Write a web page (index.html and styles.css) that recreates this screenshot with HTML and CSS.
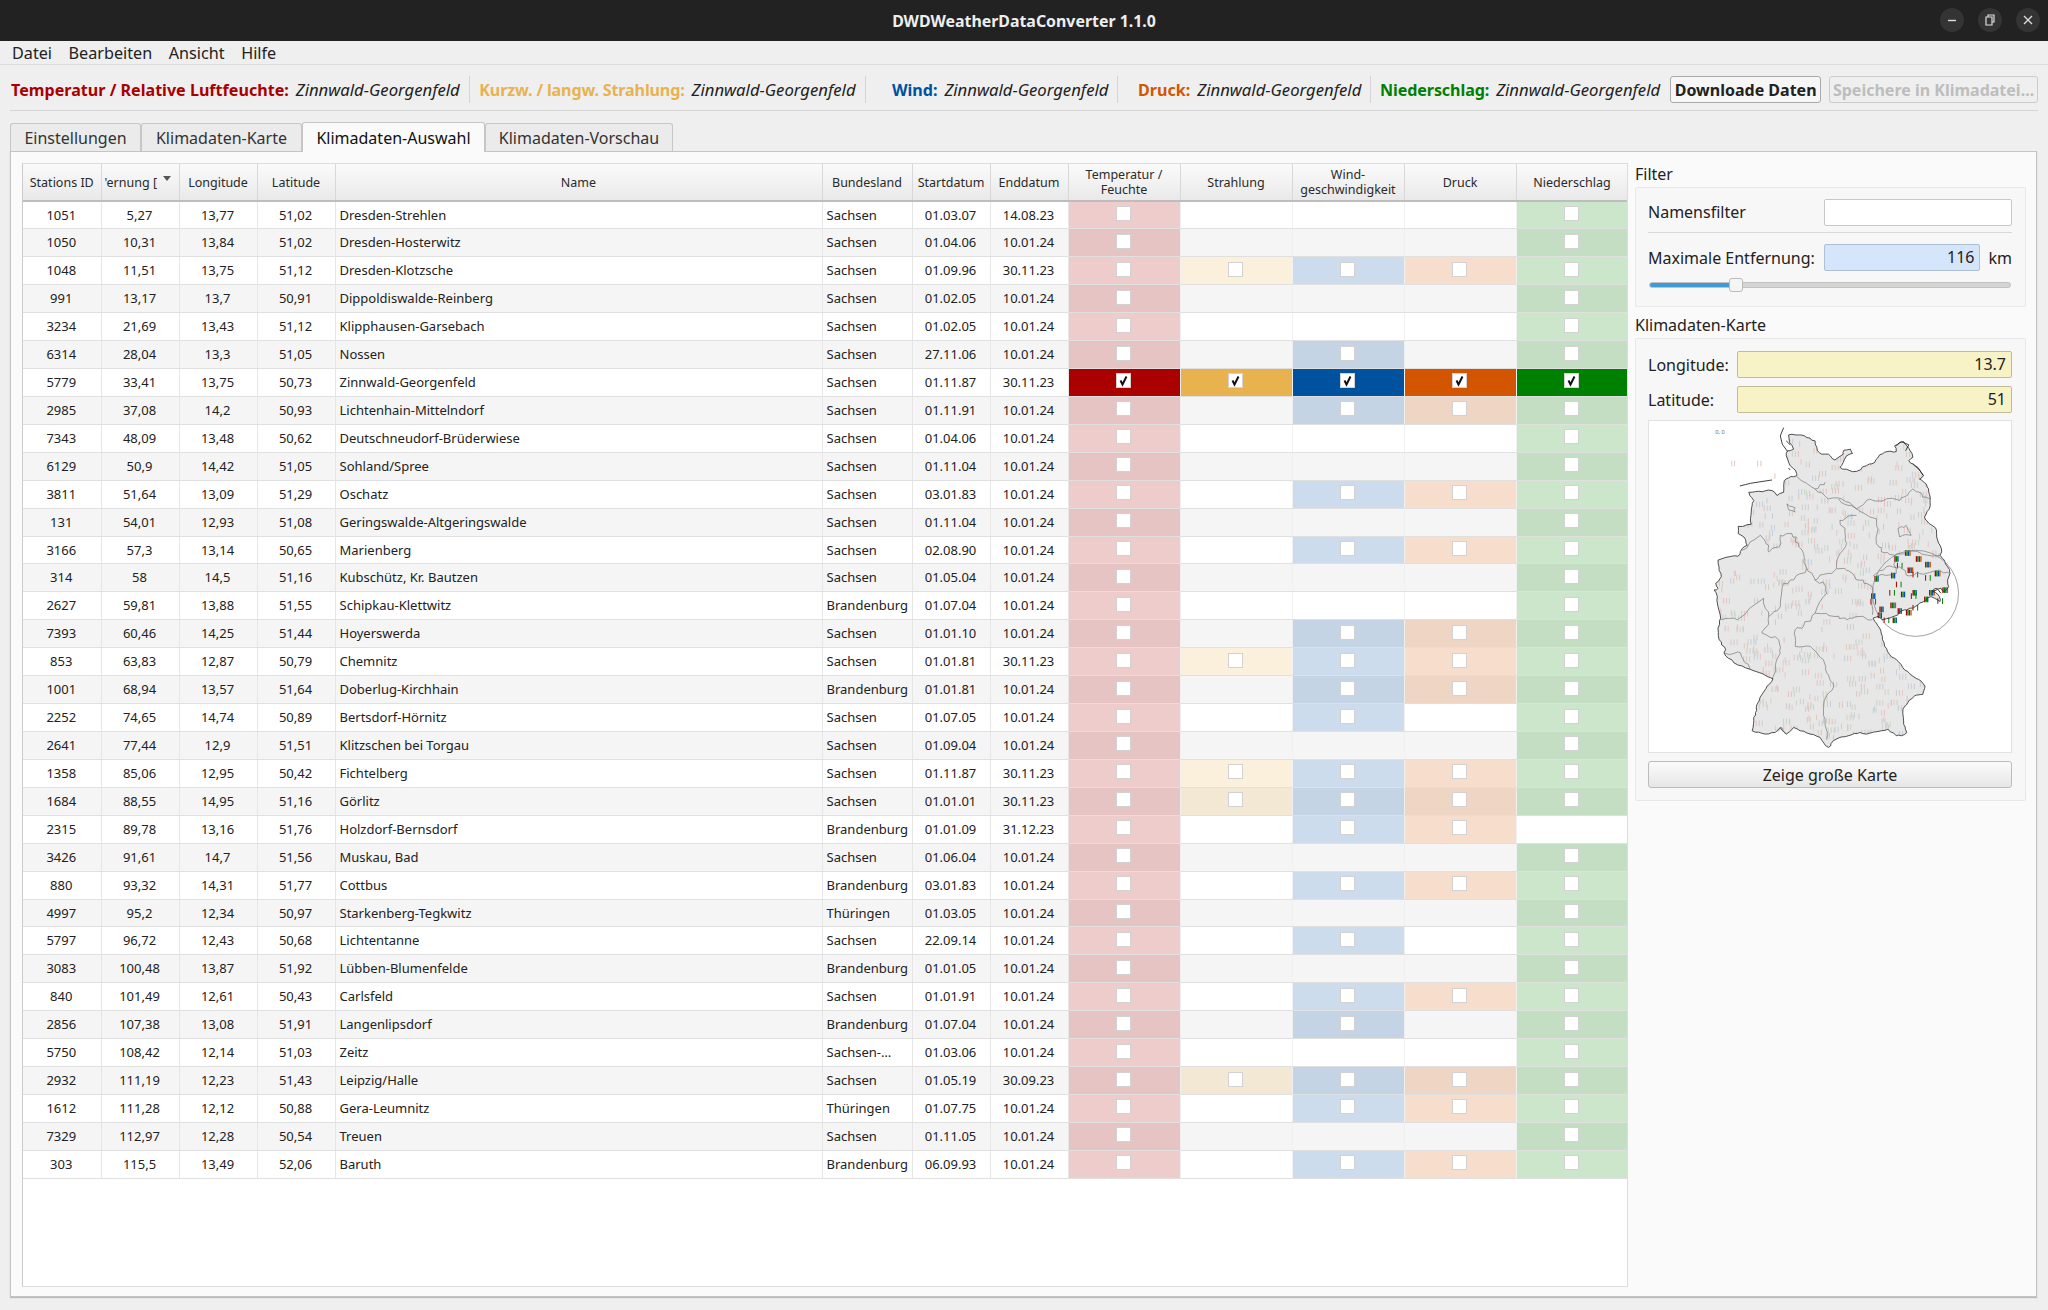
FILE: index.html
```html
<!DOCTYPE html>
<html lang="de">
<head>
    <meta charset="UTF-8">
    <title>DWDWeatherDataConverter 1.1.0</title>
    <link rel="stylesheet" href="styles.css">
</head>
<body>
    <header class="titlebar">
        <span class="title">DWDWeatherDataConverter 1.1.0</span>
        <div class="win-buttons">
            <span class="win-btn"><svg width="10" height="10" viewBox="0 0 10 10"><path d="M1 5.5h8" stroke="#ddd" stroke-width="1.4"/></svg></span>
            <span class="win-btn"><svg width="10" height="12" viewBox="0 0 10 12"><path d="M3 3V1h6v7H7M1 3h6v8H1z" fill="none" stroke="#ddd" stroke-width="1.2"/></svg></span>
            <span class="win-btn"><svg width="10" height="10" viewBox="0 0 10 10"><path d="M1 1l8 8M9 1l-8 8" stroke="#ddd" stroke-width="1.3"/></svg></span>
        </div>
    </header>

    <nav class="menubar">
        <span>Datei</span><span>Bearbeiten</span><span>Ansicht</span><span>Hilfe</span>
    </nav>

    <div class="toolbar">
        <div class="source s-temp"><b>Temperatur / Relative Luftfeuchte:</b><i>Zinnwald-Georgenfeld</i></div>
        <div class="source s-rad"><b>Kurzw. / langw. Strahlung:</b><i>Zinnwald-Georgenfeld</i></div>
        <div class="source s-wind"><b>Wind:</b><i>Zinnwald-Georgenfeld</i></div>
        <div class="source s-press"><b>Druck:</b><i>Zinnwald-Georgenfeld</i></div>
        <div class="source s-rain"><b>Niederschlag:</b><i>Zinnwald-Georgenfeld</i></div>
        <button class="tool-btn">Downloade Daten</button>
        <button class="tool-btn disabled">Speichere in Klimadatei...</button>
    </div>

    <div class="tabs">
        <span class="tab t1">Einstellungen</span>
        <span class="tab t2">Klimadaten-Karte</span>
        <span class="tab t3 active">Klimadaten-Auswahl</span>
        <span class="tab t4">Klimadaten-Vorschau</span>
    </div>

    <main class="panel">
        <div class="table-box">
            <table class="stations">
                <colgroup>
                    <col class="c-num"><col class="c-num"><col class="c-num"><col class="c-num"><col class="c-name"><col class="c-land"><col class="c-num"><col class="c-num">
                    <col class="c-flag"><col class="c-flag"><col class="c-flag"><col class="c-flag"><col class="c-flag">
                </colgroup>
                <thead>
                    <tr>
                        <th>Stations ID</th>
                        <th class="sorted"><span class="clip">'ernung [</span><span class="arrow"></span></th>
                        <th>Longitude</th><th>Latitude</th><th>Name</th><th>Bundesland</th><th>Startdatum</th><th>Enddatum</th>
                        <th>Temperatur /<br>Feuchte</th><th>Strahlung</th><th>Wind-<br>geschwindigkeit</th><th>Druck</th><th>Niederschlag</th>
                    </tr>
                </thead>
                <tbody id="rows"></tbody>
            </table>
        </div>

        <aside class="side">
            <h3>Filter</h3>
            <section class="group filter">
                <div class="line split">
                    <label>Namensfilter</label>
                    <span class="field name-field"></span>
                </div>
                <div class="line">
                    <label>Maximale Entfernung:</label>
                    <span class="field blue">116</span>
                    <span class="unit">km</span>
                </div>
                <div class="slider"><span class="fill"></span><span class="knob"></span></div>
            </section>

            <h3>Klimadaten-Karte</h3>
            <section class="group climate">
                <div class="coord">
                    <label>Longitude:</label><span class="field yellow">13.7</span>
                </div>
                <div class="coord">
                    <label>Latitude:</label><span class="field yellow">51</span>
                </div>
                <div class="map">
                    <svg width="362" height="331" viewBox="-156 0 1092 999">
                        <defs><clipPath id="land"><path id="landShape" d="M265 42 295 42 320 50 345 60 352 90 365 100 385 100 405 118 430 100 432 88 452 85 458 98 440 105 430 125 420 140 450 150 470 152 500 135 525 125 540 102 565 92 590 92 585 75 600 65 612 62 622 75 632 90 640 110 628 120 640 130 655 140 665 155 672 165 660 175 680 190 688 215 692 240 690 265 675 290 690 310 708 322 712 350 722 375 727 395 722 405 735 420 745 440 752 460 745 480 748 500 735 515 725 505 710 505 700 515 720 530 722 545 715 540 695 530 680 540 660 550 640 565 615 570 595 585 570 595 550 600 535 590 520 595 530 610 540 625 548 650 555 680 570 705 590 720 610 745 640 770 665 785 677 800 670 825 645 830 625 850 610 870 612 905 622 940 605 950 590 950 565 930 545 935 500 945 480 940 445 950 420 955 400 965 385 985 370 970 360 955 330 945 300 935 280 925 258 945 240 925 225 940 195 945 155 935 160 905 165 880 170 855 185 825 200 800 218 778 185 762 150 750 100 730 70 700 75 690 55 660 52 625 60 595 52 560 50 530 40 510 52 505 45 490 62 470 55 440 52 420 85 410 112 408 125 385 140 375 130 350 113 340 113 318 135 315 152 312 150 295 155 255 160 240 148 225 145 215 175 212 215 210 230 225 250 215 252 180 265 172 290 165 285 148 270 135 258 105 262 90 280 85 268 65z"/></clipPath></defs>
                        <use href="#landShape" class="land"/>
                        <g id="ticks"></g>
                        <use href="#landShape" class="outline"/>
                        <path id="borders" class="inner" d="M290 168 345 205 385 235 425 235 470 265 530 295 530 370 545 395 585 405M415 235 470 265 500 240 560 235 600 240 640 205 670 230 692 235M470 285 420 300 435 330 440 370 415 410 410 445 435 445 465 470 490 480 520 510 518 585M520 468 560 440 600 440 620 465 660 460 720 450 750 460M530 468 590 460 585 405 625 392 722 406M410 445 385 460 345 480 375 495 380 520 345 580 310 620 285 630 285 680 330 680 370 720 380 760 402 800 372 845 375 900 380 962M320 445 345 480M125 390 180 345 205 375 205 395 235 380 240 345 275 340 295 370 310 400 320 445 280 480 250 490 240 560 205 590 200 620 185 640 235 660 240 700 216 776M60 600 110 600 190 535 205 590M70 700 120 700 150 750M345 580 405 590 440 600 480 590 518 600M345 205 375 185M260 250 285 262 285 275 265 268zM595 325 620 315 635 345 600 350zM230 935 245 925 258 945"/>
                        <path class="coast" d="M250 20 240 45 246 70 262 92M258 60 270 72M118 196 135 192 150 188 215 178M265 142 270 148M590 75 605 62 628 72 618 90M640 128 660 148 672 165M700 515 715 508 725 520"/>
                        <circle class="radius" cx="648" cy="520" r="130"/>
                        <text class="origin" x="44" y="40">0, 0</text>
                    </svg>
                </div>
                <button class="map-btn">Zeige große Karte</button>
            </section>
        </aside>
    </main>

    <script src="script.js"></script>
</body>
</html>
```
FILE: styles.css
```css
* { box-sizing: border-box; }
html, body { margin: 0; height: 1310px; overflow: hidden; }
body { font-family: "Noto Sans", sans-serif; background: #efefef; color: #222; font-size: 16px; }

.titlebar { height: 41px; background: #222; color: #eee; display: flex; align-items: center; justify-content: center; position: relative; }
.title { font-weight: 700; font-size: 15.9px; }
.win-buttons { position: absolute; right: 8px; top: 8px; display: flex; gap: 14px; }
.win-btn { width: 24px; height: 24px; border-radius: 50%; background: #343434; display: flex; align-items: center; justify-content: center; }

.menubar { height: 24px; display: flex; gap: 16.5px; padding-left: 12px; align-items: center; font-size: 16.2px; border-bottom: 1px solid #dcdcdc; }

.toolbar { margin: 0 10px; height: 46px; padding-top: 4px; display: flex; align-items: center; border-bottom: 1px solid #d4d4d4; }
.source { height: 27px; display: flex; align-items: center; justify-content: flex-end; gap: 7px; padding-right: 9px; border-right: 1px solid #d4d4d4; white-space: nowrap; }
.source b { font-size: 16.1px; }
.source i { color: #222; font-size: 16.7px; }
.s-temp { width: 460px; }
.s-temp b { color: #aa0000; }
.s-rad { width: 396px; }
.s-rad b { color: #e8b34f; letter-spacing: -0.15px; }
.s-wind { width: 253px; }
.s-wind b { color: #00519e; }
.s-press { width: 253px; }
.s-press b { color: #d45500; }
.s-rain { width: 298px; border-right: none; }
.s-rain b { color: #008000; letter-spacing: -0.1px; }
.tool-btn { height: 27px; margin-left: 1px; font: 700 16px "Noto Sans", sans-serif; color: #222; width: 151px; padding: 0; background: #f6f6f6; border: 1px solid #aaa; border-radius: 3px; }
.tool-btn.disabled { width: 209px; margin-left: 8px; color: #bdbdbd; border-color: #ccc; background: #efefef; }

.tabs { height: 40px; padding: 10px 0 0 10px; display: flex; align-items: flex-end; font-size: 16px; }
.tab { height: 28px; display: flex; align-items: center; justify-content: center; background: #ebebeb; border: 1px solid #c6c6c6; border-bottom: none; border-radius: 3px 3px 0 0; color: #333; }
.tab.active { height: 30px; background: #fafafa; color: #111; margin-bottom: -1px; position: relative; z-index: 1; }
.t1 { width: 131px; }
.t2 { width: 161px; }
.t3 { width: 183px; }
.t4 { width: 188px; }

.panel { margin: 0 10px 0 10px; width: 2027px; height: 1146px; background: #fafafa; border: 1px solid #c4c4c4; padding: 11px 10px 9px 11px; display: flex; gap: 7px; box-shadow: 0 1px 1px #bbb; }

.table-box { width: 1606px; height: 1124px; background: #fff; border: 1px solid #ddd; border-left-color: #ccc; flex: none; overflow: hidden; }
.stations { border-collapse: collapse; table-layout: fixed; width: 1605px; font-size: 13px; color: #222; }
.c-num { width: 78px; }
.c-name { width: 487px; }
.c-land { width: 90px; }
.c-flag { width: 112px; }
.stations th { height: 37px; padding: 0; font-weight: 400; font-size: 12.5px; line-height: 15px; color: #2a2a2a; background: linear-gradient(#fafafa, #e9e9e9); border-right: 1px solid #d8d8d8; border-bottom: 2px solid #bdbdbd; }
.stations th.sorted { position: relative; }
.clip { display: block; width: 52px; margin-left: 3px; text-align: right; white-space: nowrap; }
.arrow { position: absolute; right: 8px; top: 12px; border: 4px solid transparent; border-top: 5px solid #555; }
.stations td { height: 27.93px; padding: 0 1px 1px 0; text-align: center; border-right: 1px solid #e6e6e6; border-bottom: 1px solid #e0e0e0; white-space: nowrap; overflow: hidden; }
.stations td.left { text-align: left; padding-left: 4px; }
.stations tbody tr:nth-child(even) { background: #f5f5f5; }
.stations td.f { padding: 0 2px 0 0; border-right: 1px solid #f0f0f0; }
.box { display: block; width: 15px; height: 15px; margin: -3px auto 0; background: #fff; border: 1px solid #d2d2d2; }
.box svg { display: block; }
td.temp { background: rgba(170, 0, 0, 0.2); }
td.rad { background: rgba(232, 179, 79, 0.2); }
td.wind { background: rgba(0, 81, 158, 0.2); }
td.press { background: rgba(212, 85, 0, 0.2); }
td.rain { background: rgba(0, 128, 0, 0.2); }
.selected td.temp { background: #aa0000; }
.selected td.rad { background: #e8b34f; }
.selected td.wind { background: #00519e; }
.selected td.press { background: #d45500; }
.selected td.rain { background: #008000; }

.side { width: 391px; flex: none; }
.side h3 { margin: 0; font-weight: 400; font-size: 16px; height: 24px; line-height: 22px; }
.group { background: #f7f7f7; border: 1px solid #e8e8e8; border-radius: 2px; padding: 11px 13px 12px 12px; margin-bottom: 7px; }
.filter { height: 120px; }
.climate { padding-top: 12px; }
.line { display: flex; align-items: center; height: 27px; margin-bottom: 11px; }
.line label { width: 176px; flex: none; }
.split { height: 34px; padding-bottom: 7px; border-bottom: 1px solid #d8d8d8; }
.field { display: block; height: 27px; line-height: 25px; padding: 0 5px; text-align: right; background: #fff; border: 1px solid #c8c8c8; border-radius: 2px; }
.name-field { width: 188px; }
.blue { width: 158px; background: #d5e6fb; border-color: #aebfd8; }
.unit { margin-left: 8px; }
.slider { position: relative; height: 6px; margin: 2px 1px 0; background: #d4d4d4; border: 1px solid #c2c2c2; border-radius: 3px; }
.fill { display: block; width: 82px; height: 4px; background: #3f9ad6; border-radius: 2px; }
.knob { position: absolute; left: 79px; top: -5px; width: 14px; height: 14px; background: #f5f5f5; border: 1px solid #bbb; border-radius: 3px; }
.coord { display: flex; align-items: center; justify-content: space-between; height: 27px; margin-bottom: 8px; }
.coord .field { width: 275px; }
.yellow { background: #f8f3c6; border-color: #c0bb98; }
.map { width: 364px; height: 333px; margin-top: -1px; background: #fff; border: 1px solid #e2e2e2; }
.map svg { display: block; }
.land { fill: #e7e7e7; }
.outline { fill: none; stroke: #333; stroke-width: 2.6; stroke-linejoin: round; }
.inner { fill: none; stroke: #666; stroke-width: 1.8; stroke-linejoin: round; }
.coast { fill: none; stroke: #222; stroke-width: 2.6; }
.radius { fill: none; stroke: #888; stroke-width: 2.4; }
.origin { font-size: 17px; fill: #666; font-family: "Noto Sans", sans-serif; }
.map-btn { display: block; width: 364px; height: 27px; margin-top: 8px; padding: 0; font: 16px "Noto Sans", sans-serif; color: #222; background: linear-gradient(#fbfbfb, #e6e6e6); border: 1px solid #bcbcbc; border-radius: 3px; }
```
FILE: script.js
```js
// id, distance, lon, lat, name, state, start, end, flags (S = radiation, W = wind, D = pressure, N = rain)
const stations = [
    ["1051", "5,27", "13,77", "51,02", "Dresden-Strehlen", "Sachsen", "01.03.07", "14.08.23", "N"],
    ["1050", "10,31", "13,84", "51,02", "Dresden-Hosterwitz", "Sachsen", "01.04.06", "10.01.24", "N"],
    ["1048", "11,51", "13,75", "51,12", "Dresden-Klotzsche", "Sachsen", "01.09.96", "30.11.23", "SWDN"],
    ["991", "13,17", "13,7", "50,91", "Dippoldiswalde-Reinberg", "Sachsen", "01.02.05", "10.01.24", "N"],
    ["3234", "21,69", "13,43", "51,12", "Klipphausen-Garsebach", "Sachsen", "01.02.05", "10.01.24", "N"],
    ["6314", "28,04", "13,3", "51,05", "Nossen", "Sachsen", "27.11.06", "10.01.24", "WN"],
    ["5779", "33,41", "13,75", "50,73", "Zinnwald-Georgenfeld", "Sachsen", "01.11.87", "30.11.23", "SWDN"],
    ["2985", "37,08", "14,2", "50,93", "Lichtenhain-Mittelndorf", "Sachsen", "01.11.91", "10.01.24", "WDN"],
    ["7343", "48,09", "13,48", "50,62", "Deutschneudorf-Brüderwiese", "Sachsen", "01.04.06", "10.01.24", "N"],
    ["6129", "50,9", "14,42", "51,05", "Sohland/Spree", "Sachsen", "01.11.04", "10.01.24", "N"],
    ["3811", "51,64", "13,09", "51,29", "Oschatz", "Sachsen", "03.01.83", "10.01.24", "WDN"],
    ["131", "54,01", "12,93", "51,08", "Geringswalde-Altgeringswalde", "Sachsen", "01.11.04", "10.01.24", "N"],
    ["3166", "57,3", "13,14", "50,65", "Marienberg", "Sachsen", "02.08.90", "10.01.24", "WDN"],
    ["314", "58", "14,5", "51,16", "Kubschütz, Kr. Bautzen", "Sachsen", "01.05.04", "10.01.24", "N"],
    ["2627", "59,81", "13,88", "51,55", "Schipkau-Klettwitz", "Brandenburg", "01.07.04", "10.01.24", "N"],
    ["7393", "60,46", "14,25", "51,44", "Hoyerswerda", "Sachsen", "01.01.10", "10.01.24", "WDN"],
    ["853", "63,83", "12,87", "50,79", "Chemnitz", "Sachsen", "01.01.81", "30.11.23", "SWDN"],
    ["1001", "68,94", "13,57", "51,64", "Doberlug-Kirchhain", "Brandenburg", "01.01.81", "10.01.24", "WDN"],
    ["2252", "74,65", "14,74", "50,89", "Bertsdorf-Hörnitz", "Sachsen", "01.07.05", "10.01.24", "WN"],
    ["2641", "77,44", "12,9", "51,51", "Klitzschen bei Torgau", "Sachsen", "01.09.04", "10.01.24", "N"],
    ["1358", "85,06", "12,95", "50,42", "Fichtelberg", "Sachsen", "01.11.87", "30.11.23", "SWDN"],
    ["1684", "88,55", "14,95", "51,16", "Görlitz", "Sachsen", "01.01.01", "30.11.23", "SWDN"],
    ["2315", "89,78", "13,16", "51,76", "Holzdorf-Bernsdorf", "Brandenburg", "01.01.09", "31.12.23", "WD"],
    ["3426", "91,61", "14,7", "51,56", "Muskau, Bad", "Sachsen", "01.06.04", "10.01.24", "N"],
    ["880", "93,32", "14,31", "51,77", "Cottbus", "Brandenburg", "03.01.83", "10.01.24", "WDN"],
    ["4997", "95,2", "12,34", "50,97", "Starkenberg-Tegkwitz", "Thüringen", "01.03.05", "10.01.24", "N"],
    ["5797", "96,72", "12,43", "50,68", "Lichtentanne", "Sachsen", "22.09.14", "10.01.24", "WN"],
    ["3083", "100,48", "13,87", "51,92", "Lübben-Blumenfelde", "Brandenburg", "01.01.05", "10.01.24", "N"],
    ["840", "101,49", "12,61", "50,43", "Carlsfeld", "Sachsen", "01.01.91", "10.01.24", "WDN"],
    ["2856", "107,38", "13,08", "51,91", "Langenlipsdorf", "Brandenburg", "01.07.04", "10.01.24", "WN"],
    ["5750", "108,42", "12,14", "51,03", "Zeitz", "Sachsen-…", "01.03.06", "10.01.24", "N"],
    ["2932", "111,19", "12,23", "51,43", "Leipzig/Halle", "Sachsen", "01.05.19", "30.09.23", "SWDN"],
    ["1612", "111,28", "12,12", "50,88", "Gera-Leumnitz", "Thüringen", "01.07.75", "10.01.24", "WDN"],
    ["7329", "112,97", "12,28", "50,54", "Treuen", "Sachsen", "01.11.05", "10.01.24", "N"],
    ["303", "115,5", "13,49", "52,06", "Baruth", "Brandenburg", "06.09.93", "10.01.24", "WDN"],
];

const check = '<svg width="13" height="13" viewBox="0 0 13 13"><path d="M3.5 6.5 5.5 10.5 9.5 2.5" fill="none" stroke="#111" stroke-width="2"/></svg>';

function flagCell(cls, on, selected) {
    if (!on) return '<td class="f"></td>';
    return `<td class="f ${cls}"><span class="box">${selected ? check : ""}</span></td>`;
}

document.getElementById("rows").innerHTML = stations.map(s => {
    const sel = s[0] === "5779";
    const f = s[8];
    return `<tr${sel ? ' class="selected"' : ""}>
        <td>${s[0]}</td><td>${s[1]}</td><td>${s[2]}</td><td>${s[3]}</td>
        <td class="left">${s[4]}</td><td class="left">${s[5]}</td><td>${s[6]}</td><td>${s[7]}</td>
        ${flagCell("temp", true, sel)}${flagCell("rad", f.includes("S"), sel)}${flagCell("wind", f.includes("W"), sel)}${flagCell("press", f.includes("D"), sel)}${flagCell("rain", f.includes("N"), sel)}
    </tr>`;
}).join("");

let seed = 7;
function rnd(n) {
    seed = (seed * 16807) % 2147483647;
    return seed % n;
}

// borders on the map are traced coarsely, so wobble the long straight pieces a bit
function roughen(d, amp) {
    return d.split("M").filter(Boolean).map(part => {
        const closed = part.includes("z");
        const n = part.replace("z", "").trim().split(/\s+/).map(Number);
        let out = `M${n[0]} ${n[1]}`;
        for (let i = 2; i < n.length; i += 2) {
            const steps = Math.min(4, Math.ceil(Math.hypot(n[i] - n[i - 2], n[i + 1] - n[i - 1]) / 12));
            for (let k = 1; k < steps; k++) {
                const x = n[i - 2] + (n[i] - n[i - 2]) * k / steps + rnd(amp * 2 + 1) - amp;
                const y = n[i - 1] + (n[i + 1] - n[i - 1]) * k / steps + rnd(amp * 2 + 1) - amp;
                out += ` ${x} ${y}`;
            }
            out += ` ${n[i]} ${n[i + 1]}`;
        }
        return out + (closed ? "z" : "");
    }).join("");
}
const borders = document.getElementById("borders");
borders.setAttribute("d", roughen(borders.getAttribute("d"), 5));
const landShape = document.getElementById("landShape");
landShape.setAttribute("d", roughen(landShape.getAttribute("d"), 2));

// station markers on the map: pale ones everywhere, full colour inside the search radius
const nearby = [[622,390],[590,408],[598,428],[630,442],[683,425],[645,455],[655,408],[712,452],[683,465],[530,468],[580,458],[595,485],[735,502],[520,520],[575,510],[610,515],[645,510],[640,520],[695,510],[680,530],[645,555],[600,565],[578,548],[518,537],[545,560],[540,578],[558,593],[585,593],[625,570],[720,535]];
const colours = ["#aa0000", "#008000", "#00519e", "#d45500", "#e8b34f"];
const pale = ["#e8c4c4", "#c6d8c6", "#c2cfdc", "#dccbbc", "#cdcdcd", "#e6c0c0"];
let marks = "";
function tick(x, y, colour, w) {
    marks += `<rect x="${x}" y="${y}" width="${w}" height="17" fill="${colour}"/>`;
}
for (let i = 0; i < 520; i++) {
    const x = 40 + rnd(670), y = 40 + rnd(930);
    if (Math.hypot(x - 648, y - 520) < 132) continue;
    const n = 1 + rnd(3);
    for (let k = 0; k < n; k++) tick(x + k * 9, y, pale[rnd(pale.length)], 3);
}
const paleMarks = `<g clip-path="url(#land)">${marks}</g>`;
marks = "";
[[92,120],[100,120],[170,120],[180,120],[222,158]].forEach(p => tick(p[0], p[1], pale[rnd(pale.length)], 3));
nearby.forEach((p, i) => {
    if (i % 3 === 2) {
        tick(p[0] - 6, p[1], colours[0], 3);
        tick(p[0] + 8, p[1], colours[1], 3);
        return;
    }
    const n = 3 + rnd(2);
    for (let k = 0; k < n; k++) tick(p[0] - 6 + k * 4.5, p[1], colours[k], 4);
});
document.getElementById("ticks").innerHTML = paleMarks + marks;
```
